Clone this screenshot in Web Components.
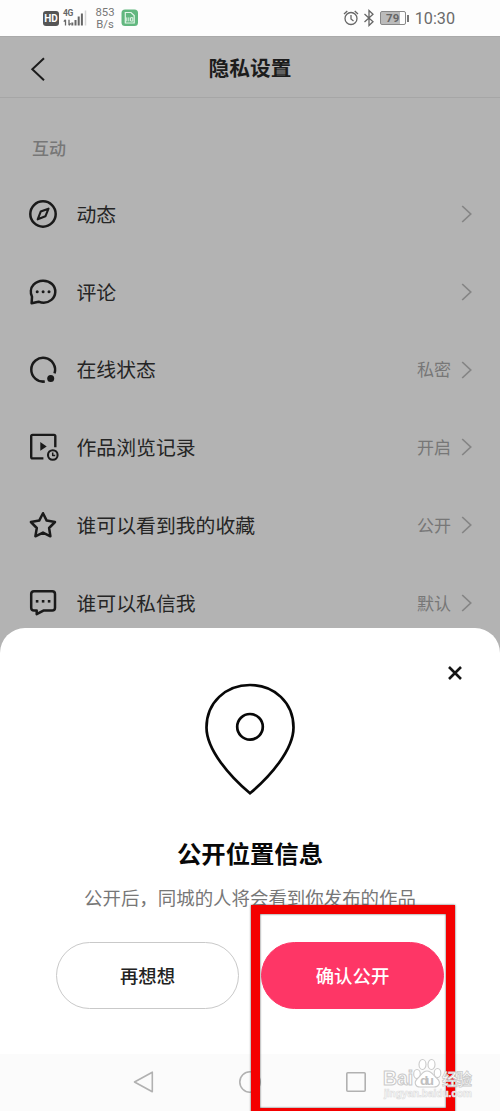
<!DOCTYPE html>
<html lang="zh-CN">
<head>
<meta charset="utf-8">
<title>隐私设置</title>
<style>
html,body{margin:0;height:1111px;overflow:hidden}
body{font-family:Roboto,"Noto Sans CJK SC",sans-serif}
</style>
</head>
<body>
<phone-screen>
  <status-bar slot="status"></status-bar>
  <settings-page heading="隐私设置" section="互动">
    <setting-row icon="compass">动态</setting-row>
    <setting-row icon="comment">评论</setting-row>
    <setting-row icon="online" value="私密">在线状态</setting-row>
    <setting-row icon="history" value="开启">作品浏览记录</setting-row>
    <setting-row icon="star" value="公开">谁可以看到我的收藏</setting-row>
    <setting-row icon="message" value="默认">谁可以私信我</setting-row>
  </settings-page>
  <bottom-sheet slot="sheet">
    <span slot="title">公开位置信息</span>
    <span slot="text">公开后，同城的人将会看到你发布的作品</span>
    <pill-button slot="actions">再想想</pill-button>
    <pill-button slot="actions" primary>确认公开</pill-button>
  </bottom-sheet>
  <nav-bar slot="nav"></nav-bar>
  <highlight-box slot="over"></highlight-box>
  <water-mark slot="over"></water-mark>
</phone-screen>
<script>
const ICONS={
compass:'<circle cx="15" cy="15" r="12.7"/><path d="M20.5 9.7 17.4 17.3 9.7 20.3 12.7 12.6Z" stroke-width="2.1"/>',
comment:'<path d="M3.6 26.3 4 19.8C2.2 16 2.4 11 5.6 7.7 10.5 2.7 19 2.4 24 7 28.7 11.5 28.2 19 23.4 22.9 19.3 26.2 14.5 26.3 10.6 24.7Z"/><g fill="currentColor" stroke="none"><circle cx="9.2" cy="14.8" r="1.5"/><circle cx="15.1" cy="14.8" r="1.5"/><circle cx="21" cy="14.8" r="1.5"/></g>',
online:'<path d="M16.8 26.5A11.9 11.9 0 1 1 26.5 18.4"/><circle cx="22.7" cy="23.5" r="3.5" fill="currentColor" stroke="none"/>',
history:'<path d="M15.4 26.4H4.6Q3.2 26.4 3.2 25V4.2Q3.2 2.9 4.6 2.9H26Q27.3 2.9 27.3 4.2V15.2" stroke-width="2.4"/><path d="M12.3 9.9V18.8L18.7 14.4Z" fill="currentColor" stroke="none"/><circle cx="24.8" cy="23" r="4.8" stroke-width="2.1"/><path d="M24.7 20.4V23.4H27.2" stroke-width="1.5"/>',
star:'<path d="M15 3.2 18.7 10.6 27 12 21.1 18 22.4 26.3 15 22.6 7.4 26.3 8.8 18 2.9 12 11.2 10.6Z"/>',
message:'<path d="M6 3.2H24.2Q27 3.2 27 6V19.8Q27 22.6 24.2 22.6H15.4L8.7 26.2V22.6H6Q3.2 22.6 3.2 19.8V6Q3.2 3.2 6 3.2Z"/><g fill="currentColor" stroke="none"><rect x="7.8" y="12" width="2.6" height="2.6"/><rect x="13.8" y="12" width="2.6" height="2.6"/><rect x="19.8" y="12" width="2.6" height="2.6"/></g>'};

function define(name,render){
  customElements.define(name,class extends HTMLElement{
    constructor(){super();this.attachShadow({mode:'open'})}
    connectedCallback(){const t=document.createElement('template');t.innerHTML=render(this);this.shadowRoot.replaceChildren(t.content.cloneNode(true))}
  });
}

define('phone-screen',()=>`<style>
:host{display:flex;flex-direction:column;position:relative;width:500px;height:1111px;overflow:hidden;background:#b3b3b3}
.main{flex:1;min-height:0}
.modal{position:absolute;left:0;right:0;bottom:0;height:483px;display:flex;flex-direction:column}
</style><slot name="status"></slot><div class="main"><slot></slot></div><div class="modal"><slot name="sheet"></slot><slot name="nav"></slot></div><slot name="over"></slot>`);

define('status-bar',()=>`<style>
:host{display:flex;justify-content:space-between;height:36px;box-sizing:border-box;padding:0 45px 0 43px;background:#fdfdfd;color:#666;flex:none}
div{display:flex;align-items:center}
svg{display:block;flex:none}
.hd{width:16px;height:15px;border-radius:3px;background:#555;color:#fff;font:700 10px/15px Roboto,sans-serif;text-align:center}
.cell{margin-left:4px;position:relative;width:24px;height:20px}
.cell span{position:absolute;left:0;top:1px;font:700 8.5px/9px Roboto,sans-serif;letter-spacing:-.3px}
.speed{display:block;margin:2px 0 0 8px;width:20px;font:11.3px/12.5px Roboto,sans-serif;text-align:center;color:#777}
.sim{margin-left:6px}
.bat{margin-left:6px}
.pct{display:block;width:24px;height:12px;border:1px solid #888;border-radius:2px;background:linear-gradient(90deg,#bbb 78%,#fdfdfd 78%);font:700 11.5px/13px Roboto,sans-serif;text-align:center;color:#666;margin-left:5px}
.tip{width:2px;height:7px;background:#777;margin-left:1px}
.time{font:16.2px/36px Roboto,sans-serif;margin:2px 0 0 6px;color:#6b6b6b}
</style>
<div><span class="hd">HD</span><div class="cell"><span>4G</span><svg width="24" height="20"><path d="M2.5 17.5V12M.8 13.7 2.5 11.7M6 11.7V17.2M7.7 15.4 6 17.4" stroke="#666" stroke-width="1.3" fill="none"/><path d="M9.3 14.5v3M12.5 12v5.5M15.7 8.5v9M18.9 5.5v12" stroke="#666" stroke-width="2"/><path d="M22.5 2.5v15" stroke="#d5d5d5" stroke-width="1.5"/></svg></div>
<span class="speed">853<br>B/s</span>
<svg class="sim" width="18" height="18" viewBox="0 0 18 18"><rect x=".5" y=".5" width="16.5" height="16.5" rx="3.5" fill="#62b77f"/><path d="M4.3 3.5H10L13.2 6.5V14H4.3Z" fill="none" stroke="#e4f5e9" stroke-width="1.2"/><path d="M5.8 8.4v4M7.8 8.4v4M9.6 8.7h2.2v3.4H9.6Z" fill="none" stroke="#e4f5e9" stroke-width="1"/></svg></div>
<div><svg width="16" height="18" viewBox="0 0 16 18" fill="none" stroke="#666" stroke-width="1.3"><circle cx="8" cy="9.5" r="6"/><path d="M8 6v4l2.5 2M1 5 4.3 2M15 5 11.7 2"/></svg>
<svg style="margin-left:4px" width="12" height="18" viewBox="0 0 12 18" fill="none" stroke="#666" stroke-width="1.3"><path d="M1.5 5 10 12.7 6 16.5V1.5L10 5.3 1.5 13"/></svg>
<span class="pct">79</span><span class="tip"></span><span class="time">10:30</span></div>`);

define('settings-page',el=>`<style>
:host{display:block;background:#b3b3b3;color:#1c1c1c;border-top:1px solid #aaa;box-sizing:border-box}
header{display:grid;grid-template-columns:60px 1fr 60px;align-items:center;height:60px;border-bottom:1px solid #a6a6a6}
header svg{margin:4px 0 0 29px;display:block}
h1{margin:3px 0 0;text-align:center;font-size:20.7px;line-height:28px;font-weight:700}
h2{margin:0;padding:38px 0 0 32px;font-size:17px;line-height:26px;font-weight:500;color:#777;height:77.2px;box-sizing:border-box}
</style><header><svg width="18" height="26" viewBox="0 0 18 26"><path d="M15 2.2 3.3 13.3 15 24.3" fill="none" stroke="#1c1c1c" stroke-width="2"/></svg><h1>${el.getAttribute('heading')}</h1></header><h2>${el.getAttribute('section')}</h2><slot></slot>`);

define('setting-row',el=>`<style>
:host{display:flex;align-items:center;height:77.8px;padding:0 27px 0 28px;box-sizing:border-box;font-size:19.85px;line-height:30px}
.i{width:32px;height:30px;color:#1a1a1a;flex:none}
.t{margin-left:16.500px;padding-top:3.500px;flex:1;color:#252525}
.v{font-size:17px;color:#777;margin-right:9px;padding-top:1px}
</style><svg class="i" viewBox="0 0 32 30" fill="none" stroke="currentColor" stroke-width="2.5" stroke-linejoin="round">${ICONS[el.getAttribute('icon')]}</svg><span class="t"><slot></slot></span><span class="v">${el.getAttribute('value')||''}</span><svg width="13" height="20" viewBox="0 0 13 20"><path d="M2.2 2 10.7 10 2.2 18" fill="none" stroke="#858585" stroke-width="1.7"/></svg>`);

define('bottom-sheet',()=>`<style>
:host{display:flex;flex-direction:column;align-items:center;position:relative;flex:1;background:#fff;border-radius:25px 25px 0 0}
.close{position:absolute;right:37px;top:37px}
.pin{margin-top:54px;display:block}
.title{margin-top:40.500px;font-size:24.35px;line-height:36px;font-weight:700;color:#080808}
.text{margin-top:12.500px;font-size:18.45px;line-height:28px;color:#777;white-space:nowrap}
.actions{display:flex;gap:22px;margin-top:29px}
</style><svg class="close" width="16" height="16"><path d="M2 2 14 14M14 2 2 14" stroke="#151515" stroke-width="2.6"/></svg>
<svg class="pin" width="94" height="114" viewBox="0 0 94 114" fill="none" stroke="#080808" stroke-width="2.7"><path d="M47 111.3C27.5 95 3.5 68 3.5 45.5 3.5 20.5 22.8 3 47 3S90.500 20.500 90.500 45.500C90.500 68 66.500 95 47 111.300Z"/><circle cx="47" cy="44.800" r="12.800"/></svg>
<div class="title"><slot name="title"></slot></div><div class="text"><slot name="text"></slot></div><div class="actions"><slot name="actions"></slot></div>`);

define('pill-button',()=>`<style>
:host{display:block}
button{display:block;width:183px;height:67px;padding:3px 0 0;border:1.5px solid #c9c9c9;border-radius:34px;background:#fff;color:#222;font:500 18.4px/28px Roboto,"Noto Sans CJK SC",sans-serif}
:host([primary]) button{background:#fe3666;border-color:#fe3666;color:#fff}
</style><button><slot></slot></button>`);

define('nav-bar',()=>`<style>
:host{display:flex;height:57px;box-sizing:border-box;padding-bottom:2px;flex:none;background:#fbfbfb;justify-content:center;align-items:center;gap:82px}
svg{display:block}
</style>
<svg width="24" height="24" viewBox="0 0 24 24" fill="none" stroke="#b1b1b1" stroke-width="1.6" stroke-linejoin="round"><path d="M20.300 2.200V21.800L2.500 12Z"/></svg>
<svg width="24" height="24" fill="none" stroke="#b1b1b1" stroke-width="1.6"><circle cx="12" cy="12" r="10.200"/></svg>
<svg width="24" height="24" fill="none" stroke="#b1b1b1" stroke-width="1.6"><rect x="2.800" y="2.800" width="18.400" height="18.400" rx="1"/></svg>`);

define('highlight-box',()=>`<style>
:host{position:absolute;left:251px;top:905px;width:204px;height:212px;box-sizing:border-box;border:9px solid #f40000;box-shadow:0 0 2px #555,inset 0 0 2px #333}
</style>`);

define('water-mark',()=>`<style>
:host{position:absolute;left:382px;top:1056px;width:94px;height:46px}
svg{display:block;overflow:visible}
text{font-family:"Liberation Sans","Noto Sans CJK SC",sans-serif;font-weight:700}
</style><svg width="94" height="46" viewBox="0 0 94 46" fill="#fff" stroke="#cacaca" stroke-width="1.100"><text x="1" y="29" font-size="20" textLength="30" lengthAdjust="spacingAndGlyphs">Bai</text>
<ellipse cx="35" cy="18" rx="3.300" ry="4.500"/><ellipse cx="40.500" cy="8.500" rx="3.500" ry="5"/><ellipse cx="49.500" cy="8.500" rx="3.500" ry="5"/><ellipse cx="55.500" cy="17" rx="3.300" ry="4.500"/><path d="M45 15C40 15 39 20 35.500 22.500 31 27 34 31 38 31H52C57 31 59.500 26.500 55 22.500 51 19.500 50 15 45 15Z"/>
<text x="38" y="28.500" font-size="13.500" textLength="14" fill="#c0c0c0" stroke="none">du</text><text x="60" y="28.500" font-size="15.500" textLength="30" stroke-width=".8">经验</text><text x="2" y="41" font-size="10.500" stroke="#dedede" stroke-width=".7" textLength="88" lengthAdjust="spacingAndGlyphs">jingyan.baidu.com</text></svg>`);
</script>
</body>
</html>
